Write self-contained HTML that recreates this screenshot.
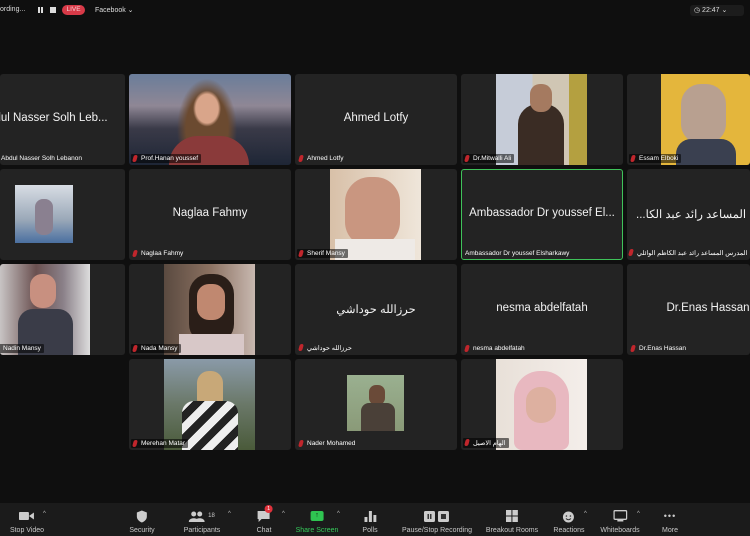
<!DOCTYPE html>
<html><head><meta charset="utf-8"><style>
*{margin:0;padding:0;box-sizing:border-box}
html,body{width:750px;height:536px;overflow:hidden}
body{background:#0f0f0f;position:relative;font-family:"Liberation Sans","Noto Sans CJK SC",sans-serif;color:#fff}
.t{position:absolute;width:162px;height:91px;background:#232323;border-radius:3px;overflow:hidden}
.w{position:absolute;top:0;width:162px;height:91px}
.c{position:absolute;left:0;right:0;top:38px;text-align:center;font-size:11.5px;color:#f2f2f2;white-space:nowrap}
.n{position:absolute;left:2px;bottom:2px;font-size:6.5px;color:#fff;padding:1px 3px 1px 10px;white-space:nowrap;border-radius:1px}
.n.b{background:rgba(0,0,0,.55)}
.n:before{content:"";position:absolute;left:2px;top:1px;width:4px;height:7px;background:#c0262c;border-radius:2px;transform:skewX(-15deg)}
.nm:before{display:none}
.p{position:absolute;top:0;height:91px}
.tb{position:absolute;left:0;top:503px;width:750px;height:33px;background:#1b1b1b}
.it{position:absolute;top:0;text-align:center;font-size:7px;color:#c8c8c8;transform:translateX(-50%);white-space:nowrap}
.it .ic{height:14px;margin:6px auto 4px;display:flex;justify-content:center;align-items:center}
.car{position:absolute;font-size:6px;color:#bbb}
</style></head><body>
<div style="position:absolute;left:0;top:6px;font-size:7px;color:#ddd">ording...</div>
<div style="position:absolute;left:38px;top:7px;width:2px;height:6px;background:#ddd"></div>
<div style="position:absolute;left:41px;top:7px;width:2px;height:6px;background:#ddd"></div>
<div style="position:absolute;left:50px;top:7px;width:6px;height:6px;background:#ddd"></div>
<div style="position:absolute;left:62px;top:5px;width:23px;height:10px;background:#d83a48;border-radius:5px;font-size:6.5px;text-align:center;line-height:10px;color:#f4d0d4">LIVE</div>
<div style="position:absolute;left:95px;top:6px;font-size:7px;color:#ddd">Facebook &#8964;</div>
<div style="position:absolute;left:690px;top:5px;width:54px;height:11px;background:#1c1c1c;border-radius:3px;font-size:7px;color:#ddd;line-height:11px;padding-left:4px">&#9719; 22:47 &#8964;</div>

<!-- row1 -->
<div class="t" style="left:0;top:74px;width:125px"><div class="w" style="left:-37px"><div class="c">Abdul Nasser Solh Leb...</div><div class="n" style="left:28px">Abdul Nasser Solh Lebanon</div></div></div>
<div class="t" style="left:129px;top:74px;background:linear-gradient(#6a7d9a,#8f8795 35%,#3a3a48 60%,#1e2636)">
<div class="p" style="left:48px;width:60px;background:radial-gradient(ellipse 14px 18px at 50% 38%,#d9a58a 80%,transparent 100%),radial-gradient(ellipse 30px 50px at 50% 60%,#6b4a30 70%,transparent 100%)"></div>
<div class="p" style="left:40px;top:62px;width:80px;height:29px;background:#8a3a3a;border-radius:30px 30px 0 0"></div>
<div class="n b">Prof.Hanan youssef</div></div>
<div class="t" style="left:295px;top:74px"><div class="c">Ahmed Lotfy</div><div class="n">Ahmed Lotfy</div></div>
<div class="t" style="left:461px;top:74px"><div class="p" style="left:35px;width:91px;background:linear-gradient(90deg,#c6ccd8 0 40%,#d0c6b4 40% 80%,#b4a040 80%)"><div style="position:absolute;left:22px;top:30px;width:46px;height:61px;background:#3a2c24;border-radius:20px 20px 0 0"></div><div style="position:absolute;left:34px;top:10px;width:22px;height:28px;background:#a57a60;border-radius:10px"></div></div><div class="n b">Dr.Mitwalli Ali</div></div>
<div class="t" style="left:627px;top:74px;width:123px"><div class="p" style="left:34px;width:89px;background:#e4b63c"><div style="position:absolute;left:20px;top:10px;width:45px;height:60px;background:#b8a090;border-radius:20px"></div><div style="position:absolute;left:15px;top:65px;width:60px;height:26px;background:#3a4050;border-radius:15px 15px 0 0"></div></div><div class="n b">Essam Elboki</div></div>

<!-- row2 -->
<div class="t" style="left:0;top:169px;width:125px"><div style="position:absolute;left:15px;top:16px;width:58px;height:58px;background:linear-gradient(#d8dde4,#9aa8b8 60%,#4a6fa0)"><div style="position:absolute;left:20px;top:14px;width:18px;height:36px;background:#8a8090;border-radius:8px"></div></div></div>
<div class="t" style="left:129px;top:169px"><div class="c">Naglaa Fahmy</div><div class="n">Naglaa Fahmy</div></div>
<div class="t" style="left:295px;top:169px"><div class="p" style="left:35px;width:91px;background:linear-gradient(90deg,#d8c0a8,#efe6da)"><div style="position:absolute;left:15px;top:8px;width:55px;height:70px;background:#c99680;border-radius:25px"></div><div style="position:absolute;left:5px;top:70px;width:80px;height:21px;background:#eeeae6"></div></div><div class="n b">Sherif Mansy</div></div>
<div class="t" style="left:461px;top:169px;border:1.5px solid #3fc25a"><div class="c" style="top:37px">Ambassador Dr youssef El...</div><div class="n nm" style="left:1px;bottom:1px;padding-left:2px">Ambassador Dr youssef Elsharkawy</div></div>
<div class="t" style="left:627px;top:169px;width:123px"><div class="c" dir="rtl" style="left:9px;right:auto;width:auto">المدرس المساعد رائد عبد الكا...</div><div class="n" dir="rtl" style="left:0">المدرس المساعد رائد عبد الكاظم الوائلي</div></div>

<!-- row3 -->
<div class="t" style="left:0;top:264px;width:125px"><div class="p" style="left:0;width:90px;background:linear-gradient(90deg,#c8c4c4,#6a5050 40%,#8a8088 70%,#ddd)"><div style="position:absolute;left:30px;top:10px;width:26px;height:34px;background:#c89080;border-radius:12px"></div><div style="position:absolute;left:18px;top:45px;width:55px;height:46px;background:#3a3c48;border-radius:15px 15px 0 0"></div></div><div class="n b" style="left:-7px">Nadin Mansy</div></div>
<div class="t" style="left:129px;top:264px"><div class="p" style="left:35px;width:91px;background:linear-gradient(90deg,#5a4a40,#8a7060 50%,#c8b8b0)"><div style="position:absolute;left:25px;top:10px;width:45px;height:70px;background:#2a1e18;border-radius:20px"></div><div style="position:absolute;left:33px;top:20px;width:28px;height:36px;background:#c08870;border-radius:12px"></div><div style="position:absolute;left:15px;top:70px;width:65px;height:21px;background:#d8c8c8"></div></div><div class="n b">Nada Mansy</div></div>
<div class="t" style="left:295px;top:264px"><div class="c">حرزالله حوداشي</div><div class="n">حرزالله حوداشي</div></div>
<div class="t" style="left:461px;top:264px"><div class="c">nesma abdelfatah</div><div class="n">nesma abdelfatah</div></div>
<div class="t" style="left:627px;top:264px;width:123px"><div class="w" style="left:0"><div class="c">Dr.Enas Hassan</div><div class="n">Dr.Enas Hassan</div></div></div>

<!-- row4 -->
<div class="t" style="left:129px;top:359px"><div class="p" style="left:35px;width:91px;background:linear-gradient(#8a9aa8,#6a7868 50%,#4a5a3a)"><div style="position:absolute;left:33px;top:12px;width:26px;height:40px;background:#c8a878;border-radius:12px"></div><div style="position:absolute;left:18px;top:42px;width:56px;height:49px;background:repeating-linear-gradient(135deg,#eee 0 8px,#222 8px 16px);border-radius:12px 12px 0 0"></div></div><div class="n b">Merehan Matar</div></div>
<div class="t" style="left:295px;top:359px"><div style="position:absolute;left:52px;top:16px;width:57px;height:56px;background:linear-gradient(#9ab090,#8a9a78)"><div style="position:absolute;left:22px;top:10px;width:16px;height:20px;background:#6a4a38;border-radius:7px"></div><div style="position:absolute;left:14px;top:28px;width:34px;height:28px;background:#4a4038;border-radius:8px 8px 0 0"></div></div><div class="n">Nader Mohamed</div></div>
<div class="t" style="left:461px;top:359px"><div class="p" style="left:35px;width:91px;background:linear-gradient(90deg,#e8e0d8,#f4eeea)"><div style="position:absolute;left:18px;top:12px;width:55px;height:79px;background:#e8b8c0;border-radius:26px 26px 8px 8px"></div><div style="position:absolute;left:30px;top:28px;width:30px;height:36px;background:#ddb0a0;border-radius:14px"></div></div><div class="n b" style="direction:rtl">الهام الاصيل</div></div>

<!-- toolbar -->
<div class="tb">
<div class="it" style="left:27px"><div class="ic"><svg width="16" height="10"><rect x="0" y="1" width="10" height="8" rx="1" fill="#ccc"/><path d="M10 5 L15 1.5 V8.5 Z" fill="#ccc"/></svg></div>Stop Video</div>
<div class="car" style="left:43px;top:8px">^</div>
<div class="it" style="left:142px"><div class="ic"><svg width="11" height="13"><path d="M5.5 0.5 L10.5 2.5 V6.5 C10.5 9.5 8 11.5 5.5 12.5 C3 11.5 0.5 9.5 0.5 6.5 V2.5 Z" fill="#ccc"/></svg></div>Security</div>
<div class="it" style="left:202px"><div class="ic"><svg width="16" height="11"><circle cx="5" cy="3" r="2.5" fill="#ccc"/><circle cx="11" cy="3" r="2.5" fill="#ccc"/><path d="M0 11 C0 6 10 6 10 11 Z M6 11 C6 6 16 6 16 11Z" fill="#ccc"/></svg><span style="font-size:6px;margin-left:3px">18</span></div>Participants</div>
<div class="car" style="left:228px;top:8px">^</div>
<div class="it" style="left:264px"><div class="ic" style="position:relative"><svg width="14" height="12"><path d="M1 1 H13 V9 H5 L2 12 V9 H1 Z" fill="#ccc"/></svg><span style="position:absolute;left:8px;top:-4px;width:8px;height:8px;border-radius:4px;background:#e0323c;font-size:5.5px;line-height:8px;color:#fff">1</span></div>Chat</div>
<div class="car" style="left:282px;top:8px">^</div>
<div class="it" style="left:317px;color:#35c95a"><div class="ic"><div style="width:13px;height:10px;background:#2fc451;border-radius:2px;color:#111;font-size:7px;line-height:10px">↑</div></div>Share Screen</div>
<div class="car" style="left:337px;top:8px">^</div>
<div class="it" style="left:370px"><div class="ic"><svg width="12" height="11"><rect x="0" y="6" width="3" height="5" fill="#ccc"/><rect x="4.5" y="0" width="3" height="11" fill="#ccc"/><rect x="9" y="4" width="3" height="7" fill="#ccc"/></svg></div>Polls</div>
<div class="it" style="left:437px"><div class="ic"><svg width="26" height="11"><rect x="0" y="0" width="11" height="11" rx="1.5" fill="#ccc"/><rect x="3.5" y="3" width="1.5" height="5" fill="#333"/><rect x="6" y="3" width="1.5" height="5" fill="#333"/><rect x="14" y="0" width="11" height="11" rx="1.5" fill="#ccc"/><rect x="17" y="3" width="5" height="5" fill="#333"/></svg></div>Pause/Stop Recording</div>
<div class="it" style="left:512px"><div class="ic"><svg width="12" height="12"><rect x="0" y="0" width="5.5" height="5.5" fill="#ccc"/><rect x="6.5" y="0" width="5.5" height="5.5" fill="#ccc"/><rect x="0" y="6.5" width="5.5" height="5.5" fill="#ccc"/><rect x="6.5" y="6.5" width="5.5" height="5.5" fill="#ccc"/></svg></div>Breakout Rooms</div>
<div class="it" style="left:569px"><div class="ic"><svg width="13" height="13"><circle cx="6" cy="7" r="5.5" fill="#ccc"/><circle cx="4" cy="6" r="0.8" fill="#333"/><circle cx="8" cy="6" r="0.8" fill="#333"/><path d="M3.5 8.5 Q6 11 8.5 8.5" stroke="#333" fill="none"/></svg></div>Reactions</div>
<div class="car" style="left:584px;top:8px">^</div>
<div class="it" style="left:620px"><div class="ic"><svg width="14" height="12"><rect x="0.7" y="0.7" width="12.6" height="8.6" rx="1" stroke="#ccc" fill="none" stroke-width="1.3"/><rect x="4" y="10" width="6" height="1.5" fill="#ccc"/></svg></div>Whiteboards</div>
<div class="car" style="left:637px;top:8px">^</div>
<div class="it" style="left:670px"><div class="ic" style="font-size:9px;letter-spacing:1px;color:#ccc">•••</div>More</div>
</div>
</body></html>
